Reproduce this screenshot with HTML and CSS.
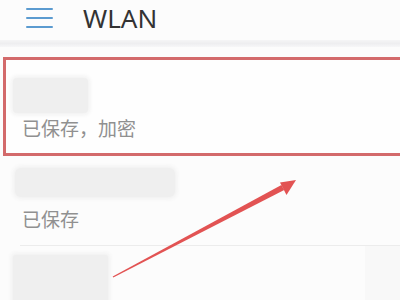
FILE: index.html
```html
<!DOCTYPE html>
<html>
<head>
<meta charset="utf-8">
<link rel="stylesheet" href="styles.css">
</head>
<body>
<div class="page">
  <header class="header">
    <div class="menu"><span></span><span></span><span></span></div>
    <div class="title">WLAN</div>
  </header>
  <div class="shade"></div>
  <div class="list">
    <div class="item boxed">
      <div class="ssid ssid1"></div>
      <div class="status">已保存，加密</div>
    </div>
    <div class="item second">
      <div class="ssid ssid2"></div>
      <div class="status">已保存</div>
    </div>
    <div class="divider"></div>
    <div class="item third">
      <div class="ssid ssid3"></div>
      <div class="side"></div>
    </div>
  </div>
  <svg class="arrow" width="400" height="300" viewBox="0 0 400 300">
    <polygon points="113.3,277.6 112.7,276.4 281.4,185.1 284.2,189.9" fill="#e25353"/>
    <polygon points="296,180 280,182.5 286.5,195" fill="#e25353"/>
  </svg>
</div>
</body>
</html>
```
FILE: styles.css
```css
html, body {
  margin: 0;
  padding: 0;
  background: #fcfcfc;
}
.page {
  position: relative;
  width: 400px;
  height: 300px;
  overflow: hidden;
  font-family: "Noto Sans CJK SC", "Noto Sans", sans-serif;
}
.header {
  height: 40px;
  display: flex;
  align-items: center;
  padding-left: 26px;
  gap: 30px;
  box-sizing: border-box;
  padding-bottom: 4px;
  background: #fcfcfc;
}
.menu {
  width: 27px;
  display: flex;
  flex-direction: column;
  gap: 7px;
}
.menu span {
  display: block;
  height: 2px;
  background: #5b9bd0;
  border-radius: 1px;
}
.title {
  font-family: "Noto Sans", sans-serif;
  font-size: 26px;
  color: #333;
  line-height: 30px;
}
.shade {
  height: 7px;
  background: linear-gradient(#f5f5f6, #eeeef0 50%, #f7f7f8);
}
.list {
  padding-top: 10px;
}
.item {
  position: relative;
}
.boxed {
  margin-left: 3px;
  border: 3px solid #d36a6b;
  border-right: none;
  background: #fefefe;
  padding: 18px 0 0 7px;
  box-sizing: content-box;
  height: 75px;
}
.ssid {
  background: #efefef;
  border-radius: 4px;
  box-shadow: 0 0 4px 2px #f1f1f1;
}
.ssid1 {
  width: 75px;
  height: 35px;
}
.status {
  font-size: 19px;
  color: #909090;
  line-height: 24px;
  margin-top: 3px;
  padding-left: 9px;
}
.second {
  padding: 12px 0 0 15px;
  height: 77px;
}
.ssid2 {
  width: 160px;
  height: 29px;
  border-radius: 6px;
}
.second .status {
  margin-top: 10px;
  padding-left: 7px;
}
.divider {
  margin-left: 20px;
  height: 1px;
  background: #ececec;
}
.third {
  display: flex;
  justify-content: space-between;
  padding: 9px 0 0 13px;
}
.ssid3 {
  width: 95px;
  height: 50px;
  border-radius: 2px;
}
.side {
  width: 35px;
  height: 55px;
  background: #f8f8f8;
  margin-top: -9px;
}
.arrow {
  position: absolute;
  left: 0;
  top: 0;
}
```
